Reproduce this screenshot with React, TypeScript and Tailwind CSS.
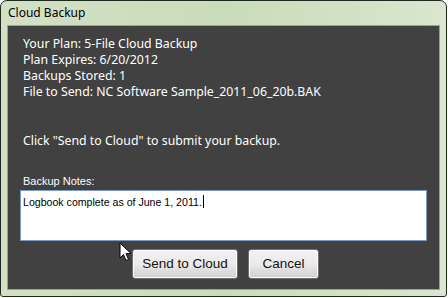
import React from 'react';

function Cursor() {
  return (
    <svg className="absolute left-[119px] top-[242px]" width="14" height="20" viewBox="0 0 14 20">
      <path d="M1 1 L1 16 L4.5 12.5 L7 18.5 L9.5 17.5 L7 11.5 L12 11.5 Z" fill="#fff" stroke="#000" strokeWidth="1" strokeLinejoin="miter" />
    </svg>
  );
}

function Boton({ children, ancho }: { children: React.ReactNode; ancho: string }) {
  return (
    <button
      className={`${ancho} flex h-[30px] items-center justify-center rounded-[3px] border border-[#707070] bg-gradient-to-b from-[#f2f2f2] via-[#ebebeb] to-[#cfcfcf] text-[13.5px] text-[#111] shadow-[inset_0_0_0_1px_#fcfcfc]`}
      style={{ fontFamily: '"Liberation Sans", Arial, sans-serif' }}
    >
      {children}
    </button>
  );
}

export default function App() {
  return (
    <div
      className="relative h-[298px] w-[448px] overflow-hidden bg-white"
      style={{ fontFamily: '"Noto Sans", "DejaVu Sans", sans-serif' }}
    >
      <div className="flex h-[297px] w-[447px] flex-col rounded-t-[7px] rounded-b-[3px] border border-[#1e2a20] bg-gradient-to-r from-[#d3e0c6] via-[#c9dcb9] to-[#dae6cf] px-[6px] pb-[6px]">
        <div className="flex h-[24px] items-center pl-[1px] text-[12px] text-black">Cloud Backup</div>
        <div className="flex flex-1 flex-col border border-[#93a78a] bg-[#414141] px-[12px] pt-[10px] text-white">
          <div className="flex flex-col pl-[3px] text-[12.3px] leading-[16px]">
            <span>Your Plan: 5-File Cloud Backup</span>
            <span>Plan Expires: 6/20/2012</span>
            <span>Backups Stored: 1</span>
            <span>File to Send: NC Software Sample_2011_06_20b.BAK</span>
          </div>
          <p className="mt-[33px] pl-[3px] text-[12.3px] leading-[16px]">Click "Send to Cloud" to submit your backup.</p>
          <span
            className="mt-[26px] pl-[3px] text-[11px] leading-[13px]"
            style={{ fontFamily: '"Liberation Sans", Arial, sans-serif' }}
          >
            Backup Notes:
          </span>
          <div
            className="mt-[2px] h-[51px] w-[407px] border border-[#7a9cc0] bg-white px-[2px] pt-[2px] text-[10.6px] leading-[13px] text-black"
            style={{ fontFamily: '"Liberation Sans", Arial, sans-serif' }}
          >
            Logbook complete as of June 1, 2011.<span className="ml-[1px] inline-block h-[13px] w-px translate-y-[2px] bg-black" />
          </div>
          <div className="mt-[8px] flex justify-center gap-[10px] pl-[4px]">
            <Boton ancho="w-[106px]">Send to Cloud</Boton>
            <Boton ancho="w-[71px]">Cancel</Boton>
          </div>
        </div>
      </div>
      <Cursor />
    </div>
  );
}
